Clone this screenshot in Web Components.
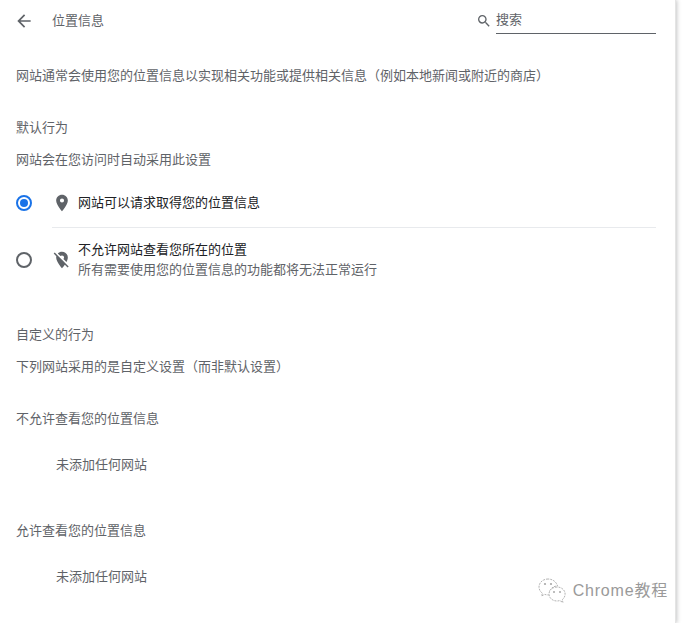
<!DOCTYPE html>
<html lang="zh">
<head>
<meta charset="utf-8">
<title>位置信息</title>
<style>
  html, body { margin: 0; height: 100%; background: #fff; }
  body {
    font: 13px/20px "Liberation Sans", "Noto Sans CJK SC", sans-serif;
    color: #5f6368;
    overflow: hidden;
  }
</style>
</head>
<body>
<settings-page>
  <page-header slot="header" title="位置信息"></page-header>
  <section-text style="--top:26px">网站通常会使用您的位置信息以实现相关功能或提供相关信息（例如本地新闻或附近的商店）</section-text>
  <section-text style="--top:32px">默认行为</section-text>
  <section-text style="--top:12px">网站会在您访问时自动采用此设置</section-text>
  <radio-row checked icon="pin" style="--top:9px;--h:48px" label="网站可以请求取得您的位置信息"></radio-row>
  <radio-row icon="pin-off" divided style="--top:0;--h:65px" label="不允许网站查看您所在的位置" sub="所有需要使用您的位置信息的功能都将无法正常运行"></radio-row>
  <section-text style="--top:33px">自定义的行为</section-text>
  <section-text style="--top:12px">下列网站采用的是自定义设置（而非默认设置）</section-text>
  <section-text style="--top:32px">不允许查看您的位置信息</section-text>
  <empty-note style="--top:26px">未添加任何网站</empty-note>
  <section-text style="--top:46px">允许查看您的位置信息</section-text>
  <empty-note style="--top:26px">未添加任何网站</empty-note>
  <wechat-mark></wechat-mark>
</settings-page>

<script>
class SettingsPage extends HTMLElement {
  connectedCallback() {
    const shadowRoot = this.attachShadow({ mode: "open" });
    shadowRoot.innerHTML = `
      <style>
        :host {
          display: block;
          box-sizing: border-box;
          width: 676px;
          height: 623px;
          position: relative;
          overflow: hidden;
          background: #fff;
        }
        .edge {
          position: absolute;
          top: 0;
          right: 0;
          bottom: 0;
          width: 1px;
          background: #e4e4e4;
        }
      </style>
      <slot name="header"></slot>
      <slot></slot>
      <div class="edge"></div>
    `;
    this.style.boxShadow = "1px 0 4px rgba(60, 64, 67, .3)";
  }
}

class PageHeader extends HTMLElement {
  connectedCallback() {
    const shadowRoot = this.attachShadow({ mode: "open" });
    shadowRoot.innerHTML = `
      <style>
        :host {
          display: flex;
          align-items: center;
          height: 40px;
          padding: 0 20px 0 14px;
        }
        svg { display: block; flex: none; }
        .back { width: 20px; height: 20px; fill: #5f6368; margin: 1px 18px 0 0; }
        .title { flex: 1; color: #5f6368; padding-top: 1px; }
        .search {
          display: flex;
          align-items: center;
          gap: 4px;
        }
        .search svg { width: 16px; height: 16px; fill: #5f6368; margin-top: 2px; }
        .field {
          width: 160px;
          height: 28px;
          line-height: 27px;
          box-sizing: border-box;
          border-bottom: 1px solid #5f6368;
        }
      </style>
      <svg class="back" viewBox="0 0 24 24"><path d="M20 11H7.830l5.590-5.590L12 4l-8 8 8 8 1.410-1.410L7.830 13H20v-2z"/></svg>
      <span class="title">${this.getAttribute("title")}</span>
      <div class="search">
        <svg viewBox="0 0 24 24"><path d="M15.500 14h-.790l-.280-.270A6.470 6.470 0 0 0 16 9.500 6.500 6.500 0 1 0 9.500 16c1.610 0 3.090-.590 4.230-1.570l.270.280v.790l5 4.990L20.490 19l-4.990-5zm-6 0C7.010 14 5 11.990 5 9.500S7.010 5 9.500 5 14 7.010 14 9.500 11.990 14 9.500 14z"/></svg>
        <div class="field">搜索</div>
      </div>
    `;
  }
}

class SectionText extends HTMLElement {
  connectedCallback() {
    const shadowRoot = this.attachShadow({ mode: "open" });
    shadowRoot.innerHTML = `
      <style>
        :host {
          display: block;
          padding: var(--top, 0) 20px 0 16px;
        }
      </style>
      <slot></slot>
    `;
  }
}

class EmptyNote extends HTMLElement {
  connectedCallback() {
    const shadowRoot = this.attachShadow({ mode: "open" });
    shadowRoot.innerHTML = `
      <style>
        :host {
          display: block;
          padding: var(--top, 0) 20px 0 56px;
        }
      </style>
      <slot></slot>
    `;
  }
}

class RadioRow extends HTMLElement {
  connectedCallback() {
    const shadowRoot = this.attachShadow({ mode: "open" });
    const pin = `<path d="M12 2C8.130 2 5 5.130 5 9c0 5.250 7 13 7 13s7-7.750 7-13c0-3.870-3.130-7-7-7zm0 9.500a2.500 2.500 0 0 1 0-5 2.500 2.500 0 0 1 0 5z"/>`;
    const pinOff = `<path d="M12 6.500a2.500 2.500 0 0 1 2.500 2.500c0 .740-.330 1.390-.830 1.850l3.630 3.630C18.270 12.700 19 10.700 19 9c0-3.870-3.130-7-7-7-1.980 0-3.770.820-5.040 2.140l3.190 3.190c.460-.500 1.110-.830 1.850-.830zM16.370 16.100l-4.630-4.630-.110-.110L3.270 3 2 4.270l3.180 3.180C5.070 7.920 5 8.450 5 9c0 5.250 7 13 7 13s1.670-1.850 3.380-4.340L18.730 21 20 19.730l-3.630-3.630z"/>`;
    const label = this.getAttribute("label");
    const sub = this.getAttribute("sub");
    shadowRoot.innerHTML = `
      <style>
        :host {
          display: flex;
          align-items: center;
          box-sizing: border-box;
          height: var(--h, 48px);
          margin-top: var(--top, 0);
          padding: 0 20px 0 16px;
        }
        .dot {
          box-sizing: border-box;
          width: 16px;
          height: 16px;
          border-radius: 50%;
          border: 2px solid #5f6368;
          flex: none;
          display: flex;
          align-items: center;
          justify-content: center;
          margin-right: 20px;
        }
        :host([checked]) .dot { border-color: #1a73e8; }
        :host([checked]) .dot::after {
          content: "";
          width: 8px;
          height: 8px;
          border-radius: 50%;
          background: #1a73e8;
        }
        svg { width: 20px; height: 20px; fill: #5f6368; flex: none; margin-right: 6px; }
        .text {
          flex: 1;
          align-self: stretch;
          display: flex;
          flex-direction: column;
          justify-content: center;
        }
        :host([divided]) .text { border-top: 1px solid #e8eaed; margin-left: -26px; padding-left: 26px; }
        .label { color: #202124; }
        .sub { color: #5f6368; }
      </style>
      <span class="dot"></span>
      <svg viewBox="0 0 24 24">${this.hasAttribute("divided") ? pinOff : pin}</svg>
      <div class="text">
        <div class="label">${label}</div>
        ${sub ? `<div class="sub">${sub}</div>` : ""}
      </div>
    `;
  }
}

class WechatMark extends HTMLElement {
  connectedCallback() {
    const shadowRoot = this.attachShadow({ mode: "open" });
    shadowRoot.innerHTML = `
      <style>
        :host {
          position: absolute;
          right: 8px;
          bottom: 19px;
          display: flex;
          align-items: center;
          gap: 6px;
          color: #9a9a9a;
          font-size: 16px;
          line-height: 24px;
          letter-spacing: .8px;
        }
        svg { width: 29px; height: 26px; fill: #fff; stroke: #b4b4b4; stroke-width: 1; stroke-dasharray: 2 1; }
        .dots { fill: #a8a8a8; stroke: none; }
      </style>
      <svg viewBox="0 0 29 26">
        <path d="M10 1C5 1 1 4.500 1 9c0 2.600 1.400 4.800 3.500 6.300L3.500 18l3.200-1.600c1 .3 2 .5 3.300.5 0 0 1 .1 1.500 0C11 11 15 8 19.500 8 18.600 4 14.700 1 10 1z"/>
        <path d="M19 9c-4.500 0-8 3-8 7s3.500 7 8 7c1 0 1.900-.2 2.700-.4L25 24.500l-.9-2.700c1.800-1.300 3-3.300 3-5.800 0-4-3.600-7-8.100-7z"/>
        <circle class="dots" cx="7" cy="6" r="1.100"/><circle class="dots" cx="13" cy="6" r="1.100"/>
        <circle class="dots" cx="16" cy="14" r="1"/><circle class="dots" cx="22" cy="14" r="1"/>
      </svg>
      <span>Chrome教程</span>
    `;
  }
}

customElements.define("settings-page", SettingsPage);
customElements.define("page-header", PageHeader);
customElements.define("section-text", SectionText);
customElements.define("empty-note", EmptyNote);
customElements.define("radio-row", RadioRow);
customElements.define("wechat-mark", WechatMark);
</script>
</body>
</html>
